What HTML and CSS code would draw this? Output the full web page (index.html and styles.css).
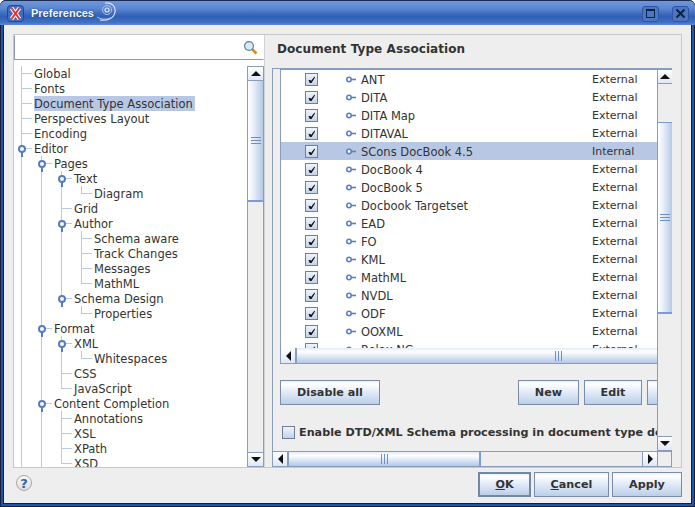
FILE: index.html
```html
<!DOCTYPE html>
<html lang="en">
<head>
    <meta charset="UTF-8">
    <title>Preferences</title>
    <link rel="stylesheet" href="styles.css">
</head>
<body>
    <svg class="defs" width="0" height="0">
        <symbol id="check" viewBox="0 0 13 13">
            <path d="M3.5 7 L5.5 7 L6 8 L9.5 3.5 L10 4.5 L6.5 10 L4.8 10 Z" fill="#111"/>
        </symbol>
        <symbol id="key" viewBox="0 0 10 7">
            <circle cx="3" cy="3.5" r="2.2" fill="#fff" stroke="#5b7fc0" stroke-width="1.6"/>
            <path d="M5 3.5 H10" stroke="#5b7fc0" stroke-width="1.6"/>
        </symbol>
    </svg>

    <div class="window">
        <div class="titlebar">
            <svg class="app-icon" width="17" height="17" viewBox="0 0 17 17">
                <rect x="0.5" y="0.5" width="16" height="16" rx="3" fill="#3d6cc4" stroke="#24478f"/>
                <path d="M4.5 3 L12.5 14 M12.5 3 L4.5 14" stroke="#f2f5fb" stroke-width="4"/>
                <path d="M4.5 3 L12.5 14 M12.5 3 L4.5 14" stroke="#e0352b" stroke-width="2"/>
            </svg>
            <span class="title">Preferences</span>
            <svg class="swirl" width="22" height="24" viewBox="0 0 22 24" fill="none" stroke="#dce6f6">
                <circle cx="11" cy="9" r="2" stroke-width="1.2"/>
                <circle cx="11" cy="9" r="4.5" stroke="#a9c0e8"/>
                <path d="M9 2 C15 1 20 5 19 11 C18 17 12 20 4 19" stroke-width="1.2"/>
                <path d="M1 16 C6 19 13 19 18 15" stroke="#a9c0e8"/>
            </svg>
            <div class="win-btn max"><span class="max-glyph"></span></div>
            <div class="win-btn close">
                <svg width="11" height="11" viewBox="0 0 11 11"><path d="M1.5 1.5 L9.5 9.5 M9.5 1.5 L1.5 9.5" stroke="#10203f" stroke-width="2"/></svg>
            </div>
        </div>

        <div class="client">
            <div class="panel">
                <div class="left-col">
                    <div class="search">
                        <svg width="15" height="15" viewBox="0 0 15 15">
                            <path d="M9 9 L13.5 13.5" stroke="#d98a17" stroke-width="2.6"/>
                            <circle cx="6" cy="6" r="4.4" fill="#d5ebfa" stroke="#5f7f9f" stroke-width="1.2"/>
                        </svg>
                    </div>
                    <div class="tree-pane">
                        <div class="tree-view">
                            <ul class="tree">
                                <li><span class="label">Global</span></li>
                                <li><span class="label">Fonts</span></li>
                                <li><span class="label selected">Document Type Association</span></li>
                                <li><span class="label">Perspectives Layout</span></li>
                                <li><span class="label">Encoding</span></li>
                                <li class="cont"><span class="knob"></span><span class="label">Editor</span>
                                    <ul>
                                        <li><span class="knob"></span><span class="label">Pages</span>
                                            <ul>
                                                <li><span class="knob"></span><span class="label">Text</span>
                                                    <ul><li><span class="label">Diagram</span></li></ul>
                                                </li>
                                                <li><span class="label">Grid</span></li>
                                                <li><span class="knob"></span><span class="label">Author</span>
                                                    <ul>
                                                        <li><span class="label">Schema aware</span></li>
                                                        <li><span class="label">Track Changes</span></li>
                                                        <li><span class="label">Messages</span></li>
                                                        <li><span class="label">MathML</span></li>
                                                    </ul>
                                                </li>
                                                <li><span class="knob"></span><span class="label">Schema Design</span>
                                                    <ul><li><span class="label">Properties</span></li></ul>
                                                </li>
                                            </ul>
                                        </li>
                                        <li><span class="knob"></span><span class="label">Format</span>
                                            <ul>
                                                <li><span class="knob"></span><span class="label">XML</span>
                                                    <ul><li><span class="label">Whitespaces</span></li></ul>
                                                </li>
                                                <li><span class="label">CSS</span></li>
                                                <li><span class="label">JavaScript</span></li>
                                            </ul>
                                        </li>
                                        <li class="cont"><span class="knob"></span><span class="label">Content Completion</span>
                                            <ul>
                                                <li><span class="label">Annotations</span></li>
                                                <li><span class="label">XSL</span></li>
                                                <li><span class="label">XPath</span></li>
                                                <li><span class="label">XSD</span></li>
                                            </ul>
                                        </li>
                                    </ul>
                                </li>
                            </ul>
                        </div>
                        <div class="vbar">
                            <div class="sb-btn"><span class="arrow-up"></span></div>
                            <div class="sb-track"><div class="thumb-v thumb-tree"><span class="grip-v"></span></div></div>
                            <div class="sb-btn"><span class="arrow-down"></span></div>
                        </div>
                    </div>
                </div>

                <div class="right-col">
                    <h2 class="heading">Document Type Association</h2>
                    <div class="frame">
                        <div class="viewport">
                            <div class="table-pane">
                                <div class="table-head"></div>
                                <div class="table-body">
                                    <div class="row"><span class="cb"><svg width="13" height="13"><use href="#check"/></svg></span><svg class="key" width="10" height="7"><use href="#key"/></svg><span>ANT</span><span class="type">External</span></div>
                                    <div class="row"><span class="cb"><svg width="13" height="13"><use href="#check"/></svg></span><svg class="key" width="10" height="7"><use href="#key"/></svg><span>DITA</span><span class="type">External</span></div>
                                    <div class="row"><span class="cb"><svg width="13" height="13"><use href="#check"/></svg></span><svg class="key" width="10" height="7"><use href="#key"/></svg><span>DITA Map</span><span class="type">External</span></div>
                                    <div class="row"><span class="cb"><svg width="13" height="13"><use href="#check"/></svg></span><svg class="key" width="10" height="7"><use href="#key"/></svg><span>DITAVAL</span><span class="type">External</span></div>
                                    <div class="row row-selected"><span class="cb"><svg width="13" height="13"><use href="#check"/></svg></span><svg class="key" width="10" height="7"><use href="#key"/></svg><span>SCons DocBook 4.5</span><span class="type">Internal</span></div>
                                    <div class="row"><span class="cb"><svg width="13" height="13"><use href="#check"/></svg></span><svg class="key" width="10" height="7"><use href="#key"/></svg><span>DocBook 4</span><span class="type">External</span></div>
                                    <div class="row"><span class="cb"><svg width="13" height="13"><use href="#check"/></svg></span><svg class="key" width="10" height="7"><use href="#key"/></svg><span>DocBook 5</span><span class="type">External</span></div>
                                    <div class="row"><span class="cb"><svg width="13" height="13"><use href="#check"/></svg></span><svg class="key" width="10" height="7"><use href="#key"/></svg><span>Docbook Targetset</span><span class="type">External</span></div>
                                    <div class="row"><span class="cb"><svg width="13" height="13"><use href="#check"/></svg></span><svg class="key" width="10" height="7"><use href="#key"/></svg><span>EAD</span><span class="type">External</span></div>
                                    <div class="row"><span class="cb"><svg width="13" height="13"><use href="#check"/></svg></span><svg class="key" width="10" height="7"><use href="#key"/></svg><span>FO</span><span class="type">External</span></div>
                                    <div class="row"><span class="cb"><svg width="13" height="13"><use href="#check"/></svg></span><svg class="key" width="10" height="7"><use href="#key"/></svg><span>KML</span><span class="type">External</span></div>
                                    <div class="row"><span class="cb"><svg width="13" height="13"><use href="#check"/></svg></span><svg class="key" width="10" height="7"><use href="#key"/></svg><span>MathML</span><span class="type">External</span></div>
                                    <div class="row"><span class="cb"><svg width="13" height="13"><use href="#check"/></svg></span><svg class="key" width="10" height="7"><use href="#key"/></svg><span>NVDL</span><span class="type">External</span></div>
                                    <div class="row"><span class="cb"><svg width="13" height="13"><use href="#check"/></svg></span><svg class="key" width="10" height="7"><use href="#key"/></svg><span>ODF</span><span class="type">External</span></div>
                                    <div class="row"><span class="cb"><svg width="13" height="13"><use href="#check"/></svg></span><svg class="key" width="10" height="7"><use href="#key"/></svg><span>OOXML</span><span class="type">External</span></div>
                                    <div class="row"><span class="cb"><svg width="13" height="13"><use href="#check"/></svg></span><svg class="key" width="10" height="7"><use href="#key"/></svg><span>Relax NG</span><span class="type">External</span></div>
                                </div>
                                <div class="hbar">
                                    <div class="sb-btn-h"><span class="arrow-left"></span></div>
                                    <div class="thumb-h thumb-table"><span class="grip-h"></span></div>
                                </div>
                            </div>

                            <div class="actions">
                                <button class="btn btn-disable">Disable all</button>
                                <button class="btn btn-new">New</button>
                                <button class="btn btn-edit">Edit</button>
                                <button class="btn btn-clipped">Duplicate</button>
                            </div>

                            <div class="enable-row">
                                <span class="cb cb-empty"></span>
                                <span class="enable-text">Enable DTD/XML Schema processing in document type detection</span>
                            </div>
                        </div>

                        <div class="vbar">
                            <div class="sb-btn"><span class="arrow-up"></span></div>
                            <div class="sb-track"><div class="thumb-v thumb-outer"><span class="grip-v"></span></div></div>
                            <div class="sb-btn"><span class="arrow-down"></span></div>
                        </div>

                        <div class="hbar hbar-outer">
                            <div class="sb-btn-h"><span class="arrow-left"></span></div>
                            <div class="sb-track-h"><div class="thumb-h thumb-outer-h"><span class="grip-h"></span></div></div>
                            <div class="sb-btn-h"><span class="arrow-right"></span></div>
                        </div>
                        <div class="corner"></div>
                    </div>
                </div>
            </div>

            <div class="footer">
                <span class="help">?</span>
                <div class="footer-btns">
                    <button class="btn btn-ok"><u>O</u>K</button>
                    <button class="btn btn-cancel"><u>C</u>ancel</button>
                    <button class="btn btn-apply">Apply</button>
                </div>
            </div>
        </div>
    </div>
</body>
</html>
```

FILE: styles.css
```css
html, body {
    margin: 0;
    padding: 0;
}

body {
    width: 695px;
    height: 507px;
    overflow: hidden;
    font-family: "DejaVu Sans", sans-serif;
    font-size: 11.5px;
    color: #333;
}

.defs {
    display: block;
    height: 0;
}

.window {
    width: 695px;
    height: 507px;
    box-sizing: border-box;
    display: flex;
    flex-direction: column;
    background-color: #2353a8;
    border: 1px solid #14203c;
    border-top-width: 0;
    border-radius: 6px 6px 0 0;
}

/* title bar */
.titlebar {
    height: 25px;
    margin: 0 -1px;
    padding: 0 6px 0 7px;
    flex-shrink: 0;
    display: flex;
    align-items: center;
    border-top: 1px solid #1c2c50;
    box-sizing: border-box;
    border-radius: 6px 6px 0 0;
    background: linear-gradient(#6f97dc, #5c88d2 30%, #3a69bd 55%, #2f5fb4 65%, #4272c4 90%, #5f8ad6);
}

.app-icon {
    margin-top: 1px;
}

.title {
    margin-left: 7px;
    font-family: "Liberation Sans", sans-serif;
    font-size: 11px;
    font-weight: bold;
    color: #f4f7fc;
    text-shadow: 0 0 2px #1f3f80;
}

.swirl {
    margin-left: 2px;
}

.win-btn {
    width: 17px;
    height: 16px;
    box-sizing: border-box;
    display: flex;
    align-items: center;
    justify-content: center;
    background-color: #4a76c4;
    border: 1px solid #2f569f;
    border-radius: 3px;
    margin-top: 1px;
}

.max {
    margin-left: auto;
}

.close {
    margin-left: 13px;
}

.max-glyph {
    width: 7px;
    height: 6px;
    border: 1px solid #10203f;
    border-top-width: 2px;
}

/* client area */
.client {
    flex: 1;
    min-height: 0;
    display: flex;
    flex-direction: column;
    margin: 0 2px 2px;
    padding: 9px 9px 0;
    background-color: #eeeeee;
    border: 1px solid #14203c;
    border-top: none;
}

.panel {
    height: 434px;
    flex-shrink: 0;
    box-sizing: border-box;
    display: flex;
    border: 1px solid #c8c8c8;
}

.left-col {
    width: 250px;
    flex-shrink: 0;
    display: flex;
    flex-direction: column;
    border-right: 1px solid #d2d2d2;
}

.search {
    height: 25px;
    flex-shrink: 0;
    box-sizing: border-box;
    display: flex;
    align-items: center;
    justify-content: flex-end;
    padding-right: 5px;
    background-color: #fff;
    border: 1px solid #8c9ab0;
    border-top-color: #fff;
    border-right-color: #fff;
}

.tree-pane {
    flex: 1;
    min-height: 0;
    display: flex;
    background-color: #fff;
    padding-top: 6px;
}

.tree-view {
    flex: 1;
    min-width: 0;
    overflow: hidden;
}

/* tree */
.tree, .tree ul {
    list-style: none;
    margin: 0;
    padding: 0 0 0 7px;
}

.tree li {
    position: relative;
    padding-left: 13px;
    line-height: 15px;
}

.tree li::before {
    content: "";
    position: absolute;
    left: 0;
    top: 0;
    width: 10px;
    height: 7px;
    border-left: 1px solid #b9c9e2;
    border-bottom: 1px solid #b9c9e2;
}

.tree li:not(:last-child)::after,
.tree li.cont::after {
    content: "";
    position: absolute;
    left: 0;
    top: 0;
    bottom: 0;
    border-left: 1px solid #b9c9e2;
}

.knob {
    position: absolute;
    z-index: 1;
    left: -3px;
    top: 4px;
    width: 4px;
    height: 4px;
    border: 2px solid #557cc0;
    border-radius: 50%;
    background-color: #fff;
}

.knob::after {
    content: "";
    position: absolute;
    left: 1px;
    top: 5px;
    width: 2px;
    height: 5px;
    background-color: #557cc0;
}

.label {
    display: inline-block;
    height: 14px;
    padding: 1px 2px 0 0;
    white-space: nowrap;
    vertical-align: top;
}

.selected {
    background-color: #b8c8e4;
}

/* scrollbars */
.vbar {
    width: 16px;
    flex-shrink: 0;
    display: flex;
    flex-direction: column;
    box-sizing: border-box;
    background-color: #eeeeee;
}

.tree-pane .vbar {
    width: 17px;
    border-left: 1px solid #8a9cbc;
}

.sb-btn {
    height: 15px;
    flex-shrink: 0;
    display: flex;
    align-items: center;
    justify-content: center;
    box-sizing: border-box;
    background: linear-gradient(#ffffff, #dfe8f5);
    border: 1px solid #8a9cbc;
    border-left: none;
}

.sb-track {
    flex: 1;
    min-height: 0;
    border-right: 1px solid #8a9cbc;
}

.thumb-v {
    box-sizing: border-box;
    display: flex;
    align-items: center;
    justify-content: center;
    background: linear-gradient(to right, #ffffff, #e9f0fa 35%, #b4c9e6);
    border-bottom: 2px solid #7b9cd8;
}

.thumb-tree {
    height: 121px;
}

.thumb-outer {
    margin-top: 38px;
    height: 192px;
    border-top: 1px solid #7b9cd8;
}

.grip-v {
    width: 10px;
    height: 5px;
    border-top: 1px solid #6e8fc8;
    border-bottom: 1px solid #6e8fc8;
    background: linear-gradient(transparent 40%, #6e8fc8 40%, #6e8fc8 60%, transparent 60%);
}

.hbar {
    height: 15px;
    display: flex;
    flex-shrink: 0;
}

.sb-btn-h {
    width: 15px;
    flex-shrink: 0;
    box-sizing: border-box;
    display: flex;
    align-items: center;
    justify-content: center;
    background: linear-gradient(#ffffff, #dfe8f5);
    border-right: 1px solid #8a9cbc;
}

.thumb-h {
    display: flex;
    align-items: center;
    justify-content: center;
    box-sizing: border-box;
    background: linear-gradient(#e2ebf7, #ffffff 25%, #d9e5f4 60%, #b4c9e6);
}

.thumb-table {
    flex: 1;
    padding-left: 163px;
}

.grip-h {
    width: 5px;
    height: 10px;
    border-left: 1px solid #6e8fc8;
    border-right: 1px solid #6e8fc8;
    background: linear-gradient(to right, transparent 40%, #6e8fc8 40%, #6e8fc8 60%, transparent 60%);
}

.arrow-up, .arrow-down {
    width: 0;
    height: 0;
    border-left: 5px solid transparent;
    border-right: 5px solid transparent;
}

.arrow-up {
    border-bottom: 5px solid #111;
}

.arrow-down {
    border-top: 5px solid #111;
}

.arrow-left, .arrow-right {
    width: 0;
    height: 0;
    border-top: 5px solid transparent;
    border-bottom: 5px solid transparent;
}

.arrow-left {
    border-right: 5px solid #111;
}

.arrow-right {
    border-left: 5px solid #111;
}

/* right side */
.right-col {
    flex: 1;
    min-width: 0;
    display: flex;
    flex-direction: column;
}

.heading {
    height: 33px;
    flex-shrink: 0;
    margin: 0;
    padding: 5px 0 0 12px;
    box-sizing: border-box;
    font-size: 12px;
    line-height: 18px;
    letter-spacing: 0.08px;
    color: #333;
}

.frame {
    flex: 1;
    min-height: 0;
    width: 400px;
    margin-left: 7px;
    box-sizing: border-box;
    display: grid;
    grid-template-columns: 384px 15px;
    grid-template-rows: 382px 15px;
    border: 1px solid #8a9cbc;
}

.frame > .vbar {
    width: 15px;
    border-left: 1px solid #8a9cbc;
}

.frame .sb-btn {
    border-right: none;
}

.frame .sb-track {
    border-right: none;
}

.viewport {
    overflow: hidden;
    padding-left: 7px;
    display: flex;
    flex-direction: column;
    min-width: 0;
}

.table-pane {
    width: 377px;
    height: 295px;
    flex-shrink: 0;
    display: flex;
    flex-direction: column;
    border-bottom: 1px solid #8a9cbc;
    border-left: 1px solid #8a9cbc;
    box-sizing: border-box;
}

.table-head {
    flex-shrink: 0;
    border-bottom: 1px solid #8a9cbc;
}

.table-body {
    flex: 1;
    min-height: 0;
    overflow: hidden;
    background-color: #fff;
}

.row {
    height: 18px;
    display: grid;
    grid-template-columns: 65px 15px 231px 1fr;
    align-items: center;
    line-height: 18px;
    white-space: nowrap;
}

.row > span:not(.cb) {
    padding-top: 1px;
}

.row .type {
    font-size: 11px;
}

.row-selected {
    background-color: #b8c8e4;
}

.cb {
    width: 13px;
    height: 13px;
    box-sizing: border-box;
    display: block;
    margin-left: 24px;
    background: linear-gradient(#f4f7fc, #bfd0e9);
    outline: 1px solid #6f7f98;
    outline-offset: -1px;
}

.cb svg {
    display: block;
}

.key {
    display: block;
}

.hbar .thumb-h {
    border-left: 1px solid #8a9cbc;
}

.actions {
    height: 25px;
    margin-top: 16px;
    flex-shrink: 0;
    width: 460px;
    display: flex;
}

.btn {
    height: 25px;
    box-sizing: border-box;
    padding: 0;
    font-family: "DejaVu Sans", sans-serif;
    font-size: 11.2px;
    font-weight: bold;
    color: #333;
    background: linear-gradient(#e9f0fa, #ffffff 12%, #dce7f6 55%, #bccfe8);
    border: 1px solid #7a8ca8;
    flex-shrink: 0;
}

.btn-disable {
    width: 100px;
}

.btn-new {
    width: 61px;
    margin-left: 138px;
}

.btn-edit {
    width: 58px;
    margin-left: 5px;
}

.btn-clipped {
    width: 90px;
    margin-left: 5px;
}

.enable-row {
    margin-top: 21px;
    display: flex;
    align-items: center;
    flex-shrink: 0;
    white-space: nowrap;
}

.cb-empty {
    margin-left: 2px;
    flex-shrink: 0;
}

.enable-text {
    margin-left: 4px;
    font-size: 11.2px;
    font-weight: bold;
}

.hbar-outer {
    height: 15px;
    border-top: 1px solid #8a9cbc;
    box-sizing: border-box;
}

.sb-track-h {
    flex: 1;
    min-width: 0;
}

.thumb-outer-h {
    width: 193px;
    height: 100%;
    border-right: 2px solid #7b9cd8;
}

.hbar-outer .sb-btn-h:last-child {
    border-left: 1px solid #8a9cbc;
    border-right: none;
}

.corner {
    border-left: 1px solid #8a9cbc;
    border-top: 1px solid #8a9cbc;
}

/* footer */
.footer {
    flex: 1;
    display: flex;
    align-items: flex-start;
    justify-content: space-between;
    padding-top: 4px;
}

.help {
    width: 16px;
    height: 16px;
    box-sizing: border-box;
    margin: 3px 0 0 3px;
    display: flex;
    align-items: center;
    justify-content: center;
    border: 1px solid #a8a8a8;
    border-radius: 50%;
    background: linear-gradient(#f8f8f8, #dedede);
    color: #3a5ea8;
    font-weight: bold;
    font-size: 13px;
}

.footer-btns {
    display: flex;
    gap: 3px;
}

.btn-ok {
    width: 53px;
    border: 2px solid #7388a8;
}

.btn-cancel {
    width: 75px;
}

.btn-apply {
    width: 70px;
}
```
